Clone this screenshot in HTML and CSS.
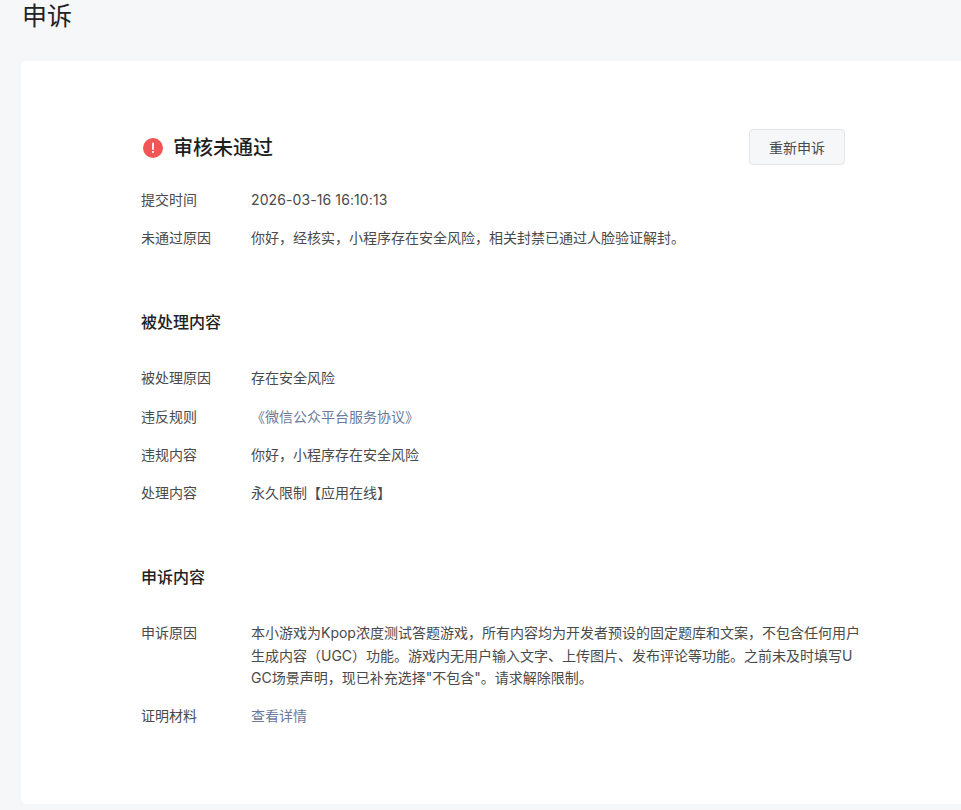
FILE: index.html
```html
<!DOCTYPE html>
<html lang="zh-CN">
<head>
<meta charset="utf-8">
<title>申诉</title>
<link rel="stylesheet" href="styles.css">
</head>
<body>
<h1 class="page-title">申诉</h1>
<main class="card">
  <div class="status-head">
    <div class="status">
      <svg class="status-icon" viewBox="0 0 20 20" aria-hidden="true">
        <circle cx="10" cy="10" r="10" fill="#f25555"/>
        <path d="M10 5.4v5.6" stroke="#fff" stroke-width="1.8" stroke-linecap="round"/>
        <circle cx="10" cy="14" r="1.1" fill="#fff"/>
      </svg>
      <span class="status-text">审核未通过</span>
    </div>
    <button class="btn" type="button">重新申诉</button>
  </div>
  <dl class="rows">
    <div class="row"><dt>提交时间</dt><dd class="date">2026-03-16 16:10:13</dd></div>
    <div class="row"><dt>未通过原因</dt><dd>你好，经核实，小程序存在安全风险，相关封禁已通过人脸验证解封。</dd></div>
  </dl>
  <h2 class="section-title">被处理内容</h2>
  <dl class="rows">
    <div class="row"><dt>被处理原因</dt><dd>存在安全风险</dd></div>
    <div class="row"><dt>违反规则</dt><dd><a class="link" href="#">《微信公众平台服务协议》</a></dd></div>
    <div class="row"><dt>违规内容</dt><dd>你好，小程序存在安全风险</dd></div>
    <div class="row"><dt>处理内容</dt><dd>永久限制【应用在线】</dd></div>
  </dl>
  <h2 class="section-title">申诉内容</h2>
  <dl class="rows">
    <div class="row"><dt>申诉原因</dt><dd>本小游戏为Kpop浓度测试答题游戏，所有内容均为开发者预设的固定题库和文案，不包含任何用户生成内容（UGC）功能。游戏内无用户输入文字、上传图片、发布评论等功能。之前未及时填写UGC场景声明，现已补充选择"不包含"。请求解除限制。</dd></div>
    <div class="row"><dt>证明材料</dt><dd><a class="link" href="#">查看详情</a></dd></div>
  </dl>
</main>
</body>
</html>
```
FILE: styles.css
```css
* { box-sizing: border-box; }
html, body { margin: 0; padding: 0; }
body {
  width: 961px;
  height: 810px;
  overflow: hidden;
  background: #f6f7f9;
  font-family: Inter, "Noto Sans CJK SC", sans-serif;
  color: #4a4a4a;
  font-size: 14px;
}
.page-title {
  margin: 0;
  padding-left: 22px;
  height: 61px;
  font-size: 25px;
  line-height: 32px;
  font-weight: 400;
  color: #222;
}
.card {
  width: 940px;
  height: 743px;
  margin-left: 21px;
  padding: 68px 0 0 120px;
  background: #fff;
  border-radius: 6px 0 0 6px;
}
.status-head {
  width: 704px;
  height: 36px;
  display: flex;
  align-items: center;
  justify-content: space-between;
}
.status { display: flex; align-items: center; gap: 11px; margin-left: 2px; }
.status-icon { width: 20px; height: 20px; display: block; margin-top: 2px; }
.status-text { font-size: 20px; font-weight: 500; color: #1f1f1f; line-height: 28px; margin-top: 1px; margin-left: -1px; }
.btn {
  width: 96px;
  height: 36px;
  padding: 0;
  background: #f6f7f9;
  border: 1px solid #e4e5e7;
  border-radius: 4px;
  font: inherit;
  color: #4a4a4a;
}
.rows { margin: 24px 0 0; }
.row { display: flex; margin-top: 16px; line-height: 22.4px; }
.row:first-child { margin-top: 0; }
.row dt { width: 110px; flex: none; }
.row dd { margin: 0; width: 610px; word-break: break-all; }
.row .date { letter-spacing: 0.1px; }
.link { color: #6b7a9c; text-decoration: none; }
.section-title {
  margin: 60px 0 0;
  font-size: 16px;
  line-height: 24px;
  font-weight: 500;
  color: #222;
}
.section-title + .rows { margin-top: 33.4px; }
```
